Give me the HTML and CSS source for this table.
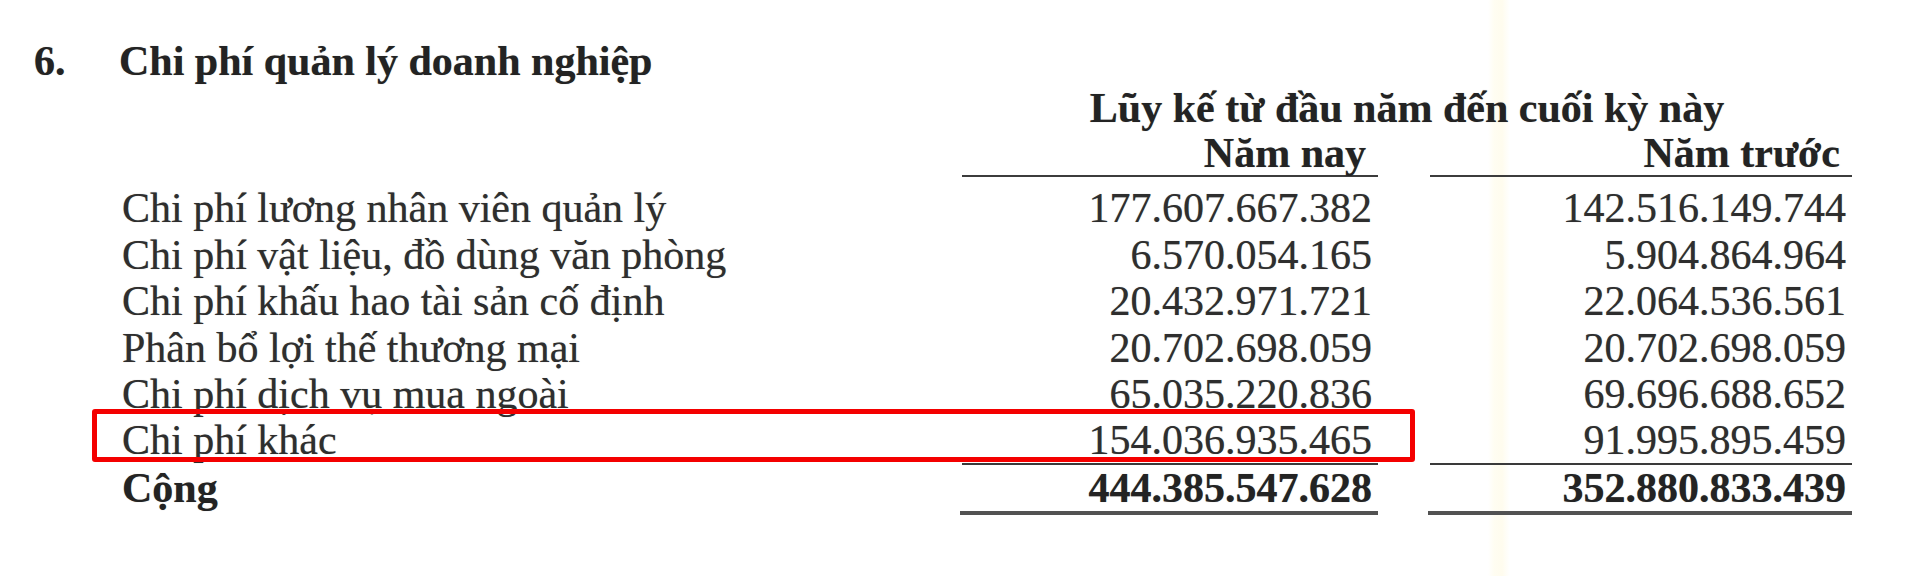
FILE: index.html
```html
<!DOCTYPE html>
<html lang="vi">
<head>
<meta charset="utf-8">
<title>Chi phí quản lý doanh nghiệp</title>
<link rel="stylesheet" href="styles.css">
</head>
<body>
<div class="page">
  <div class="heading">
    <span class="num">6.</span>
    <span class="title">Chi phí quản lý doanh nghiệp</span>
  </div>
  <div class="table">
    <div class="lbl"></div>
    <div class="span-head">Lũy kế từ đầu năm đến cuối kỳ này</div>

    <div class="lbl"></div>
    <div class="colh">Năm nay</div>
    <div class="colh">Năm trước</div>

    <div class="lbl first">Chi phí lương nhân viên quản lý</div>
    <div class="val first">177.607.667.382</div>
    <div class="val first">142.516.149.744</div>

    <div class="lbl">Chi phí vật liệu, đồ dùng văn phòng</div>
    <div class="val">6.570.054.165</div>
    <div class="val">5.904.864.964</div>

    <div class="lbl">Chi phí khấu hao tài sản cố định</div>
    <div class="val">20.432.971.721</div>
    <div class="val">22.064.536.561</div>

    <div class="lbl">Phân bổ lợi thế thương mại</div>
    <div class="val">20.702.698.059</div>
    <div class="val">20.702.698.059</div>

    <div class="lbl">Chi phí dịch vụ mua ngoài</div>
    <div class="val">65.035.220.836</div>
    <div class="val">69.696.688.652</div>

    <div class="lbl last marked">Chi phí khác<div class="highlight"></div></div>
    <div class="val last">154.036.935.465</div>
    <div class="val last">91.995.895.459</div>

    <div class="lbl total">Cộng</div>
    <div class="val total">444.385.547.628</div>
    <div class="val total">352.880.833.439</div>
  </div>
</div>
</body>
</html>
```

FILE: styles.css
```css
html, body {
  margin: 0;
  padding: 0;
}

body {
  width: 1920px;
  height: 576px;
  overflow: hidden;
  background:
    linear-gradient(to right, transparent 1488px, #fffdf2 1494px, #fffcee 1502px, transparent 1510px),
    #ffffff;
  font-family: "Liberation Serif", "Times New Roman", serif;
  font-size: 42px;
  color: #2e2e2e;
  text-shadow: 0 0 0.7px rgba(40, 40, 40, 0.55);
}

.page {
  padding-top: 38px;
}

.heading {
  display: flex;
  padding-left: 34px;
  line-height: 47px;
  font-weight: bold;
  color: #232323;
}

.num {
  width: 85px;
}

.table {
  display: grid;
  grid-template-columns: 788px 416px 422px;
  column-gap: 52px;
  padding-left: 122px;
  align-items: start;
}

.span-head {
  grid-column: 2 / 4;
  text-align: center;
  font-weight: bold;
  line-height: 47px;
  color: #232323;
}

.colh {
  font-weight: bold;
  text-align: right;
  line-height: 43px;
  padding-right: 12px;
  border-bottom: 2px solid #3c3c3c;
  color: #232323;
}

.lbl {
  line-height: 46.5px;
}

.val {
  text-align: right;
  line-height: 46.5px;
  padding-right: 6px;
}

.first {
  margin-top: 8px;
}

.last {
  line-height: 45px;
}

.val.last {
  border-bottom: 2px solid #3a3a3a;
}

.total {
  font-weight: bold;
  color: #232323;
}

.val.total {
  border-bottom: 4px solid #525252;
  margin-left: -2px;
}

.marked {
  position: relative;
}

.highlight {
  position: absolute;
  left: -30px;
  top: -9px;
  width: 1323px;
  height: 53px;
  box-sizing: border-box;
  border: 5px solid #f40000;
  border-radius: 3px;
}
```
